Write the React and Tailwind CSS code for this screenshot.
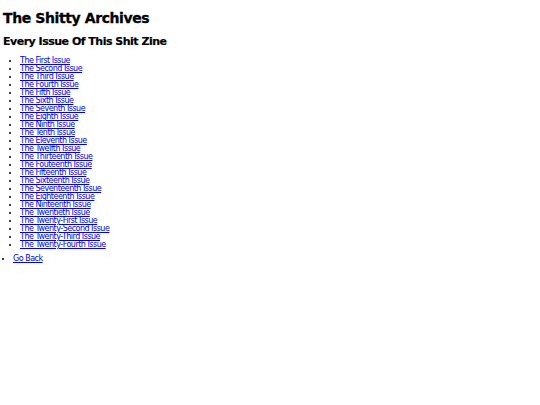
const issues = [
  "The First Issue",
  "The Second Issue",
  "The Third Issue",
  "The Fourth Issue",
  "The Fifth Issue",
  "The Sixth Issue",
  "The Seventh Issue",
  "The Eighth Issue",
  "The Ninth Issue",
  "The Tenth Issue",
  "The Eleventh Issue",
  "The Twelfth Issue",
  "The Thirteenth Issue",
  "The Fouteenth Issue",
  "The Fifteenth Issue",
  "The Sixteenth Issue",
  "The Seventeenth Issue",
  "The Eighteenth Issue",
  "The Ninteenth Issue",
  "The Twentieth Issue",
  "The Twenty-First Issue",
  "The Twenty-Second Issue",
  "The Twenty-Third Issue",
  "The Twenty-Fourth Issue",
]

export default function App() {
  return (
    <div className="min-h-[405px] bg-white px-[3px] pt-[8px] text-black font-['DejaVu_Sans',sans-serif]">
      <h1 className="text-[14px] font-bold leading-[20px] tracking-[-0.4px] [-webkit-text-stroke:0.3px_black]">The Shitty Archives</h1>
      <h2 className="mt-[7px] text-[11px] font-bold leading-[14px] tracking-[-0.5px] [-webkit-text-stroke:0.2px_black]">Every Issue Of This Shit Zine</h2>
      <ul className="mt-[8px] list-disc pl-[17px] text-[8px] leading-[8px] tracking-[-0.5px]">
        {issues.map((name) => (
          <li key={name}>
            <a href="#" className="text-[#0000ee] underline">{name}</a>
          </li>
        ))}
      </ul>
      <ul className="mt-[6px] list-disc pl-[10px] text-[8px] leading-[8px] tracking-[-0.5px]">
        <li>
          <a href="#" className="text-[#0000ee] underline">Go Back</a>
        </li>
      </ul>
    </div>
  )
}
